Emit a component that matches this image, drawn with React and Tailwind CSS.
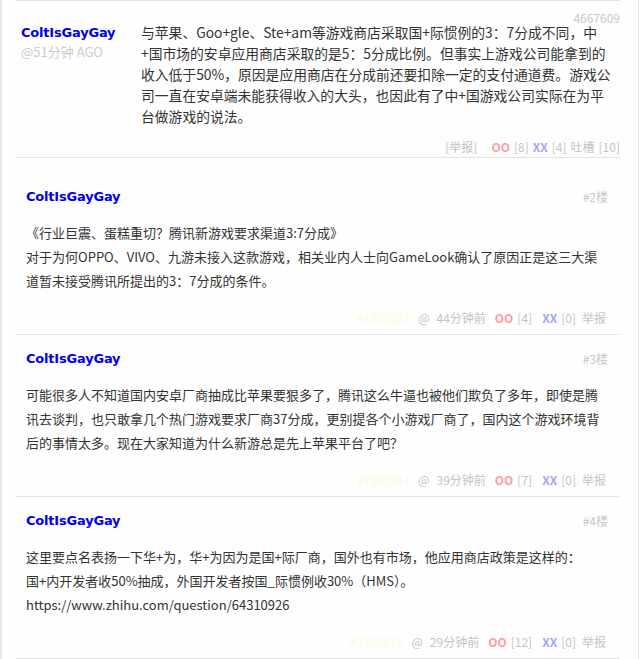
const body = { fontFamily: '"Noto Sans CJK SC", "Noto Sans", sans-serif' }
const nameFont = { fontFamily: '"DejaVu Sans", Verdana, sans-serif' }

const topPost = {
  name: 'ColtIsGayGay',
  ago: '@51分钟 AGO',
  num: '4667609',
  lines: [
    '与苹果、Goo+gle、Ste+am等游戏商店采取国+际惯例的3：7分成不同，中',
    '+国市场的安卓应用商店采取的是5：5分成比例。但事实上游戏公司能拿到的',
    '收入低于50%，原因是应用商店在分成前还要扣除一定的支付通道费。游戏公',
    '司一直在安卓端未能获得收入的大头，也因此有了中+国游戏公司实际在为平',
    '台做游戏的说法。',
  ],
}

const replies = [
  {
    floor: '#2楼',
    id: '#7303523',
    time: '44分钟前',
    oo: 4,
    xx: 0,
    lines: [
      '《行业巨震、蛋糕重切？腾讯新游戏要求渠道3:7分成》',
      '对于为何OPPO、VIVO、九游未接入这款游戏，相关业内人士向GameLook确认了原因正是这三大渠',
      '道暂未接受腾讯所提出的3：7分成的条件。',
    ],
  },
  {
    floor: '#3楼',
    id: '#7303561',
    time: '39分钟前',
    oo: 7,
    xx: 0,
    lines: [
      '可能很多人不知道国内安卓厂商抽成比苹果要狠多了，腾讯这么牛逼也被他们欺负了多年，即使是腾',
      '讯去谈判，也只敢拿几个热门游戏要求厂商37分成，更别提各个小游戏厂商了，国内这个游戏环境背',
      '后的事情太多。现在大家知道为什么新游总是先上苹果平台了吧？',
    ],
  },
  {
    floor: '#4楼',
    id: '#7303617',
    time: '29分钟前',
    oo: 12,
    xx: 0,
    lines: [
      '这里要点名表扬一下华+为，华+为因为是国+际厂商，国外也有市场，他应用商店政策是这样的：',
      '国+内开发者收50%抽成，外国开发者按国_际惯例收30%（HMS）。',
      'https://www.zhihu.com/question/64310926',
    ],
  },
]

function Name() {
  return (
    <div style={nameFont} className="text-[13px] font-bold leading-5 tracking-[-0.2px] text-[#0000ee]">
      ColtIsGayGay
    </div>
  )
}

function Reply({ post, first }) {
  return (
    <div className={`border-b border-[#e3e3e3] pl-[10px] pr-[11px] pb-2 ${first ? 'pt-[29px]' : 'pt-[14px]'}`}>
      <div className="flex items-center justify-between">
        <Name />
        <span className="text-[12px] leading-5 text-[#c8c8c8]">{post.floor}</span>
      </div>
      <div className="mt-[14px] text-[13px] leading-6 text-[#333]">
        {post.lines.map((l, i) => (
          <div key={i} className="whitespace-nowrap">{l}</div>
        ))}
      </div>
      <div className="mt-[17px] flex justify-end items-center text-[12px] leading-4 text-[#c4c4c4] pr-[2px]">
        <span className="text-[#fff9d8]">{post.id}</span>
        <span className="ml-2">@</span>
        <span className="ml-[7px]">{post.time}</span>
        <span className="ml-[9px] font-bold text-[#ff9d9d]">OO</span>
        <span className="ml-1">[{post.oo}]</span>
        <span className="ml-[10px] font-bold text-[#a3a3ff]">XX</span>
        <span className="ml-1">[{post.xx}]</span>
        <span className="ml-[6px]">举报</span>
      </div>
    </div>
  )
}

export default function App() {
  return (
    <div style={body} className="w-[641px] h-[659px] bg-white overflow-hidden">
      <div className="h-full w-[639px] border-l-2 border-r border-[#e8e8e8] bg-[#fefefe]">
        <div className="ml-[14px] w-[604px]">
          <div className="relative border-t border-b border-[#e3e3e3] h-[158px] flex">
            <div className="w-[125px] shrink-0 pl-[5px] pt-[22px]">
              <Name />
              <div className="text-[13px] leading-[18px] text-[#cccccc]">{topPost.ago}</div>
            </div>
            <div className="flex-1 pt-[21px]">
              <div className="text-[13.8px] leading-[21px] text-[#333]">
                {topPost.lines.map((l, i) => (
                  <div key={i} className="whitespace-nowrap">{l}</div>
                ))}
              </div>
            </div>
            <span className="absolute right-0 top-[10px] text-[12px] leading-[13px] text-[#c8c8c8]">{topPost.num}</span>
            <div className="absolute right-0 top-[138px] flex items-center text-[12px] leading-4 text-[#c4c4c4]">
              <span>[举报]</span>
              <span className="ml-[14px] font-bold text-[#ff9d9d]">OO</span>
              <span className="ml-1">[8]</span>
              <span className="ml-1 font-bold text-[#a3a3ff]">XX</span>
              <span className="ml-1">[4]</span>
              <span className="ml-1">吐槽</span>
              <span className="ml-1">[10]</span>
            </div>
          </div>
          <div className="w-[603px]">
            {replies.map((p, i) => (
              <Reply key={p.floor} post={p} first={i === 0} />
            ))}
          </div>
        </div>
      </div>
    </div>
  )
}
